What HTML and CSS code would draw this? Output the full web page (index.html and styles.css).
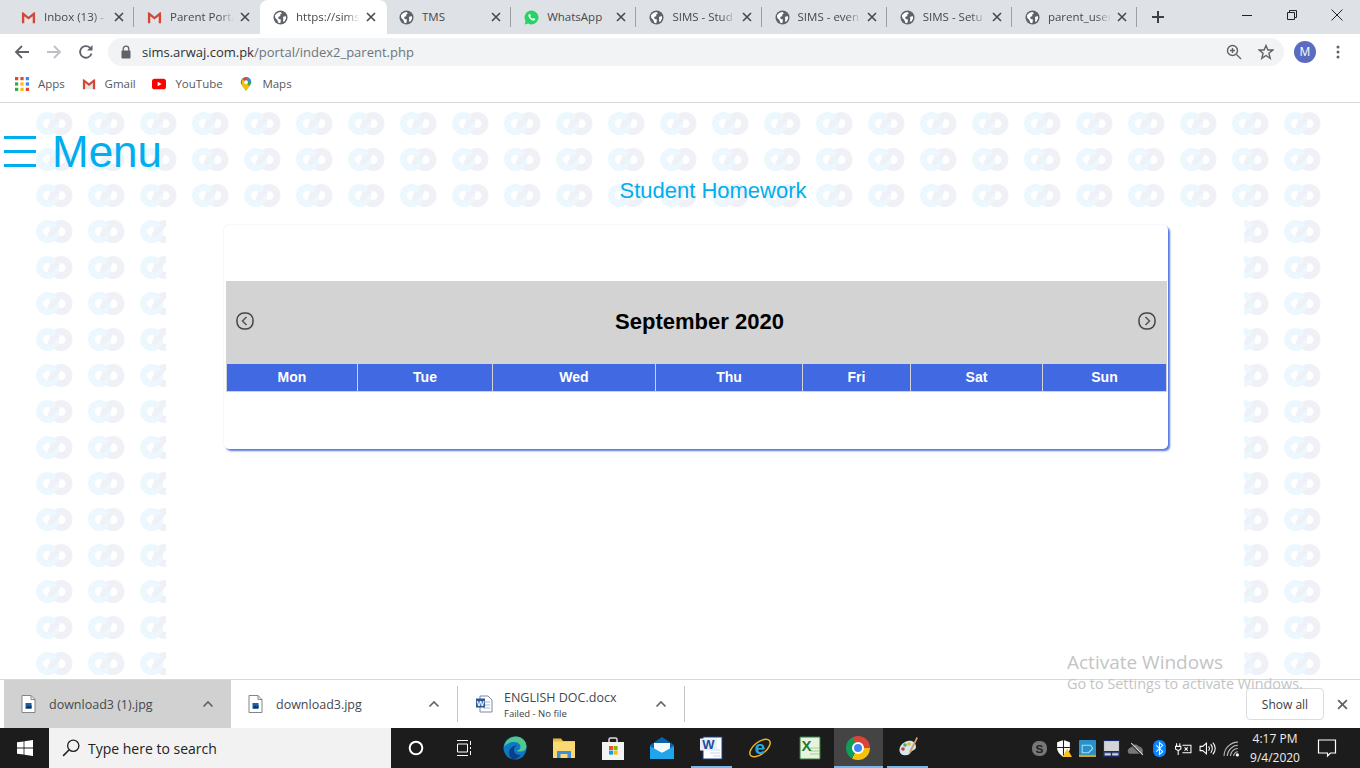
FILE: index.html
```html
<!DOCTYPE html>
<html lang="en">
    <head>
        <meta charset="utf-8">
        <meta name="viewport" content="width=device-width, initial-scale=1">
        <title>Student Homework</title>
        <link rel="stylesheet" href="styles.css">
    </head>
    <body>
        <svg class="defs">
            <symbol id="globe" viewBox="0 0 16 16">
                <circle cx="8" cy="8" r="7.5" fill="#5f6368"/>
                <path d="M2 5.5 5 3 8 2 9.5 3.5 7.5 5 8 6.5 5.5 7.5 6 9.5 8.5 10 8 13.5 6 14 4.5 10.5 2.5 8.5Z M10.5 7.5 13.5 6.5 14 9 12 12.5 10.5 12 11 9.5Z" fill="#fff"/>
            </symbol>
            <symbol id="gmail" viewBox="0 0 16 16">
                <path d="M1 3 8 8.5 15 3V14H1Z" fill="#e4e4e4"/>
                <path d="M1 2.5H2.2L8 7.2 13.8 2.5H15V14H12.5V6.6L8 10.2 3.5 6.6V14H1Z" fill="#d44638"/>
            </symbol>
            <symbol id="close" viewBox="0 0 10 10">
                <path d="M1 1 9 9M9 1 1 9" fill="none" stroke="currentColor" stroke-width="1.6"/>
            </symbol>
            <symbol id="chevron-up" viewBox="0 0 12 8">
                <path d="M1.5 6.5 6 2l4.5 4.5" fill="none" stroke="#5f6368" stroke-width="1.6"/>
            </symbol>
            <symbol id="file" viewBox="0 0 14 18">
                <path d="M.5.5H9.5L13.5 4.5V17.5H.5Z" fill="#fff" stroke="#80868b"/>
                <path d="M9.5.5V4.5H13.5" fill="none" stroke="#80868b"/>
                <rect x="4" y="8" width="6" height="5.500" fill="#1a5fa8"/>
                <path d="M4 13.500 6.500 10.500 8 12 10 10V13.500Z" fill="#0b2f5c"/>
            </symbol>
            <symbol id="round-arrow" viewBox="0 0 18 18">
                <rect x="1" y="1" width="16" height="16" rx="7" fill="none" stroke="#444" stroke-width="1.500"/>
                <path d="M10.5 5 6.5 9l4 4" fill="none" stroke="#555" stroke-width="1.500"/>
            </symbol>
        </svg>

        <div class="tabstrip">
            <div class="tab"><svg class="favicon"><use href="#gmail"/></svg><span class="tab-title fade">Inbox (13) -</span><svg class="tab-x"><use href="#close"/></svg></div>
            <div class="tab no-sep"><svg class="favicon"><use href="#gmail"/></svg><span class="tab-title fade">Parent Porta</span><svg class="tab-x"><use href="#close"/></svg></div>
            <div class="tab active no-sep"><svg class="favicon"><use href="#globe"/></svg><span class="tab-title fade">https://sims</span><svg class="tab-x"><use href="#close"/></svg></div>
            <div class="tab"><svg class="favicon"><use href="#globe"/></svg><span class="tab-title">TMS</span><svg class="tab-x"><use href="#close"/></svg></div>
            <div class="tab">
                <svg class="favicon" viewBox="0 0 16 16"><path d="M8 .5a7.4 7.4 0 0 0-6.3 11.2L.7 15.4l3.8-1A7.4 7.4 0 1 0 8 .5Z" fill="#25d366"/><path d="M5.6 4.2c-.9.6-1.2 1.8-.6 3 .9 1.9 2.400 3.300 4.400 4 1.100.3 2.200-.2 2.500-1.100l.1-.7-1.800-.9-.8.9c-1.200-.4-2.200-1.300-2.800-2.500l.7-.8-.8-1.900Z" fill="#fff"/></svg>
                <span class="tab-title">WhatsApp</span><svg class="tab-x"><use href="#close"/></svg>
            </div>
            <div class="tab"><svg class="favicon"><use href="#globe"/></svg><span class="tab-title fade">SIMS - Stud</span><svg class="tab-x"><use href="#close"/></svg></div>
            <div class="tab"><svg class="favicon"><use href="#globe"/></svg><span class="tab-title fade">SIMS - even</span><svg class="tab-x"><use href="#close"/></svg></div>
            <div class="tab"><svg class="favicon"><use href="#globe"/></svg><span class="tab-title fade">SIMS - Setu</span><svg class="tab-x"><use href="#close"/></svg></div>
            <div class="tab"><svg class="favicon"><use href="#globe"/></svg><span class="tab-title fade">parent_user</span><svg class="tab-x"><use href="#close"/></svg></div>
            <svg class="new-tab" viewBox="0 0 14 14"><path d="M7 1V13M1 7H13" stroke="#3c4043" stroke-width="2"/></svg>
            <div class="win-controls">
                <svg viewBox="0 0 12 12"><path d="M1 6.500H11" stroke="#222"/></svg>
                <svg viewBox="0 0 12 12"><path d="M1.500 3.500H8.500V10.500H1.500ZM3.500 3.500V1.500H10.500V8.500H8.500" fill="none" stroke="#222"/></svg>
                <svg viewBox="0 0 12 12"><path d="M.5.500 11.500 11.500M11.500.500 .5 11.500" stroke="#222"/></svg>
            </div>
        </div>

        <div class="toolbar">
            <svg class="nav-icon" viewBox="0 0 16 16"><path d="M15 8H2M8 2 2 8l6 6" fill="none" stroke="#5f6368" stroke-width="1.800"/></svg>
            <svg class="nav-icon" viewBox="0 0 16 16"><path d="M1 8H14M8 2l6 6-6 6" fill="none" stroke="#bdc1c6" stroke-width="1.800"/></svg>
            <svg class="nav-icon" viewBox="0 0 16 16"><path d="M13.500 9.500A5.800 5.800 0 1 1 12 3.800" fill="none" stroke="#5f6368" stroke-width="1.800"/><path d="M14.500 1V6.500H9Z" fill="#5f6368"/></svg>
            <div class="omnibox">
                <svg class="lock" viewBox="0 0 12 14"><path d="M3.200 6V4a2.800 2.800 0 0 1 5.600 0V6" fill="none" stroke="#5f6368" stroke-width="1.300"/><rect x="1.500" y="5.500" width="9" height="8" rx="1" fill="#5f6368"/></svg>
                <span class="url"><b>sims.arwaj.com.pk</b>/portal/index2_parent.php</span>
                <svg class="omni-icon zoom-icon" viewBox="0 0 16 16"><circle cx="6.500" cy="6.500" r="5" fill="none" stroke="#5f6368" stroke-width="1.400"/><path d="M10.500 10.500 15 15M6.500 4V9M4 6.500H9" stroke="#5f6368" stroke-width="1.400"/></svg>
                <svg class="omni-icon" viewBox="0 0 16 16"><path d="M8 1.500 9.900 6H14.800L10.900 9.200 12.200 14.300 8 11.500 3.800 14.300 5.100 9.200 1.200 6H6.100Z" fill="none" stroke="#5f6368" stroke-width="1.400"/></svg>
            </div>
            <span class="avatar">M</span>
            <svg class="kebab" viewBox="0 0 4 14"><circle cx="2" cy="2" r="1.500" fill="#5f6368"/><circle cx="2" cy="7" r="1.500" fill="#5f6368"/><circle cx="2" cy="12" r="1.500" fill="#5f6368"/></svg>
        </div>

        <div class="bookmarks">
            <div class="bookmark">
                <svg class="bm-icon" viewBox="0 0 13 13">
                    <rect width="3" height="3" fill="#ea4335"/><rect x="5" width="3" height="3" fill="#ea4335"/><rect x="10" width="3" height="3" fill="#4285f4"/>
                    <rect y="5" width="3" height="3" fill="#34a853"/><rect x="5" y="5" width="3" height="3" fill="#fbbc05"/><rect x="10" y="5" width="3" height="3" fill="#4285f4"/>
                    <rect y="10" width="3" height="3" fill="#34a853"/><rect x="5" y="10" width="3" height="3" fill="#fbbc05"/><rect x="10" y="10" width="3" height="3" fill="#ea4335"/>
                </svg>
                Apps
            </div>
            <div class="bookmark"><svg class="bm-icon"><use href="#gmail"/></svg>Gmail</div>
            <div class="bookmark">
                <svg class="bm-icon" viewBox="0 0 16 12"><rect width="16" height="12" rx="3" fill="#f00"/><path d="M6.500 3.500 11 6 6.500 8.500Z" fill="#fff"/></svg>
                YouTube
            </div>
            <div class="bookmark">
                <svg class="bm-icon" viewBox="0 0 12 16"><path d="M6 0a6 6 0 0 1 6 6c0 3.500-4 5.500-6 10C4 11.500 0 9.500 0 6a6 6 0 0 1 6-6Z" fill="#34a853"/><path d="M1.500 2 10 10.500C8.600 12 7 13.500 6 16 5 13.500 3 12 1.500 10Z" fill="#fbbc05"/><path d="M6 0a6 6 0 0 1 6 6L8 4Z" fill="#4285f4"/><path d="M6 0 2 2 4 4.500 8 3.500Z" fill="#ea4335"/><circle cx="6" cy="6" r="2.200" fill="#fff"/></svg>
                Maps
            </div>
        </div>

        <main class="page">
            <div class="menu-row">
                <span class="burger"><i></i><i></i><i></i></span>
                <span class="menu-label">Menu</span>
            </div>
            <h2 class="page-title">Student Homework</h2>
            <div class="sheet">
                <section class="card">
                    <div class="cal-head">
                        <svg class="cal-arrow"><use href="#round-arrow"/></svg>
                        <h3>September 2020</h3>
                        <svg class="cal-arrow next"><use href="#round-arrow"/></svg>
                    </div>
                    <div class="week">
                        <span>Mon</span><span>Tue</span><span>Wed</span><span>Thu</span><span>Fri</span><span>Sat</span><span>Sun</span>
                    </div>
                </section>
            </div>
        </main>

        <div class="activate">
            <p class="activate-big">Activate Windows</p>
            <p class="activate-small">Go to Settings to activate Windows.</p>
        </div>

        <div class="downloads">
            <div class="dl-item selected">
                <svg class="dl-icon"><use href="#file"/></svg>
                <span class="dl-name">download3 (1).jpg</span>
                <svg class="dl-chev"><use href="#chevron-up"/></svg>
            </div>
            <div class="dl-item">
                <svg class="dl-icon"><use href="#file"/></svg>
                <span class="dl-name">download3.jpg</span>
                <svg class="dl-chev"><use href="#chevron-up"/></svg>
            </div>
            <div class="dl-item">
                <svg class="dl-icon doc" viewBox="0 0 18 18"><path d="M5 1H13L17 5V17H5Z" fill="#fff" stroke="#7a8aa0"/><path d="M8 7H15M8 10H15M8 13H15" stroke="#9db4d4"/><rect x="1" y="3.500" width="9" height="9" fill="#2b579a"/><text x="5.500" y="11" class="doc-letter">W</text></svg>
                <span class="dl-name two-line">ENGLISH DOC.docx<small>Failed - No file</small></span>
                <svg class="dl-chev"><use href="#chevron-up"/></svg>
            </div>
            <button class="show-all">Show all</button>
            <svg class="dl-close"><use href="#close"/></svg>
        </div>

        <footer class="taskbar">
            <div class="start">
                <svg viewBox="0 0 16 16"><path d="M0 2.300 6.600 1.400V7.600H0ZM7.400 1.300 16 0V7.600H7.400ZM0 8.400H6.600V14.600L0 13.700ZM7.400 8.400H16V16L7.400 14.700Z" fill="#fff"/></svg>
            </div>
            <div class="search">
                <svg viewBox="0 0 16 16"><circle cx="10" cy="6" r="5" fill="none" stroke="#222" stroke-width="1.200"/><path d="M6.400 9.600 1 15" stroke="#222" stroke-width="1.400"/></svg>
                Type here to search
            </div>
            <div class="task narrow"><svg viewBox="0 0 16 16"><circle cx="8" cy="8" r="6.300" fill="none" stroke="#fff" stroke-width="2"/></svg></div>
            <div class="task narrow tight"><svg viewBox="0 0 16 16"><path d="M1 .5H12M1 15.500H12M1.500 4H11.500V12H1.500ZM14.500 1V5M14.500 7V9M14.500 11V15" fill="none" stroke="#fff"/></svg></div>
            <div class="task first-app"><svg viewBox="0 0 24 24"><circle cx="12" cy="12" r="11.500" fill="#0f78c4"/><path d="M1 11C2 4 8 .5 13 .5c6 0 10.500 4.500 10.500 10 0 3-3 5-6.500 5-2 0-3-.5-3.500-1 2 0 4-1 4-3.500C17.500 7 13 5.500 9.500 6 5 6.800 2 9 1 11Z" fill="#4fc88f"/><path d="M9 23C5.500 20 5 15 8 12c2-2 4-2.500 6-2.500-2.500 1-3.500 3-3 5.500.6 3 4 4.500 7 4-2 2.500-5.500 4.800-9 4Z" fill="#0b3f86"/></svg></div>
            <div class="task"><svg viewBox="0 0 24 24"><path d="M1 2.500H9L11 5H23V22H1Z" fill="#e8b93a"/><path d="M1 5.500H23V22H1Z" fill="#fbd972"/><path d="M5 15H19V22H15.500V18H8.500V22H5Z" fill="#3f8fdc"/></svg></div>
            <div class="task"><svg viewBox="0 0 24 24"><path d="M8 7V3.500A1.500 1.500 0 0 1 9.500 2H14.500A1.500 1.500 0 0 1 16 3.500V7" fill="none" stroke="#ddd" stroke-width="1.500"/><rect x="1" y="6" width="22" height="18" fill="#f3f3f3"/><rect x="8" y="10" width="4" height="4" fill="#f25022"/><rect x="12.600" y="10" width="4" height="4" fill="#7fba00"/><rect x="8" y="14.600" width="4" height="4" fill="#00a4ef"/><rect x="12.600" y="14.600" width="4" height="4" fill="#ffb900"/></svg></div>
            <div class="task"><svg viewBox="0 0 24 24"><path d="M12 1 24 9V23H0V9Z" fill="#0a63ad"/><path d="M4 7H20V14L12 17 4 14Z" fill="#f4f7fb"/><path d="M0 10 12 17 24 10V23H0Z" fill="#1fa5ec"/></svg></div>
            <div class="task open"><svg viewBox="0 0 24 24"><rect x="4" y="1" width="19" height="22" fill="#fff" stroke="#1c3f7c"/><path d="M11 14H21M11 17H21M14 20H21" stroke="#c9d6ea"/><rect x="1" y="2.500" width="17" height="12" fill="#e8eef8"/><text x="9.500" y="13" class="word-letter">W</text></svg></div>
            <div class="task"><svg viewBox="0 0 24 24"><ellipse cx="12" cy="12" rx="12" ry="6" transform="rotate(-38 12 12)" fill="none" stroke="#e8b52b" stroke-width="1.500"/><text x="12" y="18" class="ie-letter">e</text></svg></div>
            <div class="task"><svg viewBox="0 0 24 24"><path d="M3 1H23V23H3Z" fill="#e7f2df" stroke="#2f7d3b"/><path d="M13 12H22M13 15H22M13 18H22" stroke="#a7cf99"/><text x="9.500" y="15" class="excel-letter">X</text></svg></div>
            <div class="task open active"><span class="chrome"><i></i></span></div>
            <div class="task open"><svg viewBox="0 0 24 24"><path d="M10 6C16 3 21 6 21 11 21 14 17 14.500 16 16 15 18.500 12 20 8 19 3 17.500 3 9.500 10 6Z" fill="#d5e6ef"/><circle cx="8" cy="13" r="1.800" fill="#d23b3b"/><circle cx="10" cy="9" r="1.800" fill="#4caf50"/><circle cx="14" cy="8" r="1.800" fill="#e4b62b"/><path d="M21.500 1 15 14 13.500 19 16.500 15 23 2Z" fill="#cf9a5a"/></svg></div>

            <div class="tray">
                <svg viewBox="0 0 16 16"><rect x="1" y="1" width="14" height="14" rx="6" fill="#777"/><text x="8" y="12" class="skype-letter">S</text></svg>
                <svg viewBox="0 0 16 16"><path d="M8 0 14 2V8C14 11 11 14 8 16 5 14 2 11 2 8V2Z" fill="#fff"/><path d="M8 0V16M2 7H14" stroke="#1c1c1c"/><path d="M11.500 8 16 16H7Z" fill="#f7c31c"/></svg>
                <svg viewBox="0 0 16 16"><rect width="16" height="16" rx="1" fill="#2a90c8"/><path d="M3 5H11L13 8 9 12H3Z" fill="none" stroke="#a6e0f5"/><path d="M0 14H16V16H0Z" fill="#c9a437"/></svg>
                <svg viewBox="0 0 16 16"><rect x=".5" y=".5" width="15" height="15" fill="#d4d4d4" stroke="#1d2a6b"/><path d="M1 11H15M8 11V15" stroke="#1d2a6b" stroke-width="1.200"/><path d="M1 12H15V15H1Z" fill="none" stroke="#1d2a6b"/></svg>
                <svg viewBox="0 0 16 16"><path d="M1 12C0 9 2 7 4 7 5 4 9 3 11 6 13 6 15.500 8 15 11 15 12 14 13 13 13H3C2 13 1.500 12.500 1 12Z" fill="#777"/><path d="M3 3 14 14" stroke="#1c1c1c" stroke-width="1.400"/><path d="M4 3 15 14" stroke="#ddd"/></svg>
                <svg viewBox="0 0 16 16"><rect x="2" width="12" height="16" rx="5.500" fill="#0a84ff"/><path d="M5 5 11 11 8 13.500V2.500L11 5 5 11" fill="none" stroke="#fff"/></svg>
                <svg viewBox="0 0 16 16"><path d="M1.500 3V6M4.500 3V6M.5 6H5.500V8.500L3 10 .5 8.500ZM3 10V14M7 5H15V12H7" fill="none" stroke="#fff"/><path d="M9 7 12 10M12 7 9 10" stroke="#fff"/></svg>
                <svg viewBox="0 0 16 16"><path d="M1 6H3.500L7 3V13L3.500 10H1Z" fill="none" stroke="#fff"/><path d="M9 6C10 7 10 9 9 10M11 4C13 6 13 10 11 12M13 2.500C16 5.500 16 10.500 13 13.500" fill="none" stroke="#fff"/></svg>
                <svg viewBox="0 0 16 16"><path d="M1 15C1 8 7 2 14 2M4 15C4 10 9 5 14 5M7 15C7 11.500 10 8 14 8M10 15C10 13 12 11 14 11" fill="none" stroke="#bbb"/><circle cx="13.500" cy="14" r="1.500" fill="#fff"/></svg>
            </div>
            <div class="clock">4:17 PM<br>9/4/2020</div>
            <svg class="notify" viewBox="0 0 20 20"><path d="M1.500 2H18.500V15H13.500L10.500 18V15H1.500Z" fill="none" stroke="#fff" stroke-width="1.200"/></svg>
        </footer>
    </body>
</html>
```

FILE: styles.css
```css
html, body {height: 100%}
body {
    font-family: "Open Sans", "Liberation Sans", sans-serif;
    font-size: 12px;
    color: #3c4043;
    margin: 0;
    height: 100vh;
    overflow: hidden;
    display: flex;
    flex-direction: column;
    position: relative;
    background: #fff;
}
.defs {
    display: none;
}
p, h2, h3 {
    margin: 0;
    font-weight: normal;
}

/* tabs */
.tabstrip {
    display: flex;
    align-items: center;
    height: 34px;
    flex: none;
    padding-left: 8px;
    background: #dee1e6;
}
.tab {
    display: flex;
    align-items: center;
    box-sizing: border-box;
    width: 125.2px;
    height: 34px;
    padding: 0 10px 0 13px;
    position: relative;
}
.tab:nth-child(-n+3) {
    width: 126px;
}
.tab::after {
    content: "";
    position: absolute;
    top: 7px;
    right: 0;
    width: 1px;
    height: 20px;
    background: #9aa0a6;
}
.tab.no-sep::after {
    display: none;
}
.tab.active {
    width: 127px;
    margin-right: -1px;
    padding-right: 11px;
    background: #fff;
    border-radius: 8px 8px 0 0;
}
.favicon {
    width: 15px;
    height: 15px;
    flex: none;
    margin-right: 8px;
}
.tab-title {
    flex: 1;
    min-width: 0;
    margin-right: 2px;
    overflow: hidden;
    white-space: nowrap;
    font-size: 11.5px;
    line-height: 16px;
    color: #45494d;
}
.tab-title.fade {
    -webkit-mask-image: linear-gradient(to right, #000 72%, transparent 94%);
    mask-image: linear-gradient(to right, #000 72%, transparent 94%);
}
.tab-x {
    width: 10px;
    height: 10px;
    flex: none;
    color: #45494d;
}
.new-tab {
    width: 14px;
    height: 14px;
    margin-left: 14px;
}
.win-controls {
    display: flex;
    gap: 33px;
    margin-left: auto;
    padding-right: 17px;
    margin-top: -5px;
}
.win-controls svg {
    width: 12px;
    height: 12px;
}

/* toolbar */
.toolbar {
    display: flex;
    align-items: center;
    height: 35px;
    flex: none;
    padding-left: 14px;
}
.nav-icon {
    width: 16px;
    height: 16px;
    margin-right: 16px;
}
.omnibox {
    display: flex;
    align-items: center;
    box-sizing: border-box;
    width: 1176px;
    height: 28px;
    margin-left: -2px;
    padding: 0 10px 0 12px;
    background: #f1f3f4;
    border-radius: 14px;
}
.lock {
    width: 12px;
    height: 14px;
    margin-right: 10px;
}
.url {
    flex: 1;
    font-size: 13px;
    color: #70757a;
}
.url b {
    font-weight: normal;
    color: #2f3235;
}
.omni-icon {
    width: 16px;
    height: 16px;
}
.zoom-icon {
    margin-right: 16px;
}
.avatar {
    width: 22px;
    height: 22px;
    margin-left: 10px;
    border-radius: 50%;
    background: #5c6bc0;
    color: #fff;
    font-size: 12px;
    line-height: 22px;
    text-align: center;
}
.kebab {
    width: 4px;
    height: 14px;
    margin-left: 20px;
}

/* bookmarks */
.bookmarks {
    display: flex;
    align-items: center;
    gap: 16.700px;
    box-sizing: border-box;
    height: 34px;
    flex: none;
    padding: 0 0 4px 15px;
    border-bottom: 1px solid #d6d8da;
}
.bookmark {
    display: flex;
    align-items: center;
    gap: 9px;
    font-size: 11.500px;
    color: #55595d;
}
.bm-icon {
    width: 14px;
    height: 14px;
}

/* page */
.page {
    flex: 1;
    min-height: 0;
    display: flex;
    flex-direction: column;
    position: relative;
    font-family: "Liberation Sans", Arial, sans-serif;
}
.page::before {
    content: "";
    position: absolute;
    top: 9px;
    right: 36px;
    bottom: 0;
    left: 36px;
    background-image: url("data:image/svg+xml,%3Csvg xmlns='http://www.w3.org/2000/svg' width='52' height='36'%3E%3Ccircle cx='25' cy='11.500' r='8' fill='none' stroke='%23f0f1f6' stroke-width='7'/%3E%3Ccircle cx='11.500' cy='11.500' r='8' fill='none' stroke='%23ecf8fe' stroke-width='7'/%3E%3Cpath d='M13 16 23 6' stroke='%23f0f1f6' stroke-width='5'/%3E%3C/svg%3E");
    background-size: 52px 36px;
}
.menu-row {
    display: flex;
    align-items: center;
    gap: 16px;
    position: relative;
    margin-top: 24px;
    padding-left: 4px;
    height: 49px;
    color: #00aeef;
}
.burger {
    display: flex;
    flex-direction: column;
    gap: 11px;
    width: 32px;
}
.burger i {
    display: block;
    height: 3px;
    background: #00aeef;
}
.menu-label {
    font-size: 44px;
    line-height: 49px;
}
.page-title {
    position: relative;
    height: 26px;
    margin-top: 2px;
    padding-left: 66px;
    font-size: 22px;
    line-height: 26px;
    text-align: center;
    color: #00aeef;
}
.sheet {
    flex: 1;
    position: relative;
    margin: 3px 116px 0 166px;
    padding: 18px 0 0 58px;
    background: #fff;
}

/* calendar card */
.card {
    box-sizing: border-box;
    width: 944px;
    height: 224px;
    padding: 56px 1px 0 2px;
    background: #fff;
    border-radius: 5px;
    box-shadow: 2px 2px 2px #5577e6, 0 0 2px #dfe5fb;
}
.cal-head {
    display: flex;
    align-items: center;
    justify-content: space-between;
    height: 83px;
    padding: 0 11px 0 10px;
    background: #d3d3d3;
}
.cal-head h3 {
    font-size: 22px;
    font-weight: bold;
    line-height: 24px;
    margin: -2px 0 0 7px;
    color: #000;
}
.cal-arrow {
    width: 18px;
    height: 18px;
    margin-top: -3px;
}
.cal-arrow.next {
    transform: scaleX(-1);
}
.week {
    display: grid;
    grid-template-columns: 130px 134px 162px 146px 107px 131px 123px;
    gap: 1px;
    height: 27px;
    padding: 0 1px 1px;
    background: #d3d3d3;
}
.week span {
    background: #4169e1;
    color: #fff;
    font-size: 14px;
    font-weight: bold;
    line-height: 27px;
    text-align: center;
}

/* activate watermark */
.activate {
    position: absolute;
    left: 1067px;
    top: 650px;
    color: #c4c4c4;
    pointer-events: none;
    z-index: 2;
    font-family: "Open Sans", sans-serif;
}
.activate-big {
    font-size: 19px;
    line-height: 24px;
}
.activate-small {
    font-size: 14.400px;
    line-height: 20px;
    white-space: nowrap;
}

/* download shelf */
.downloads {
    display: flex;
    align-items: center;
    box-sizing: border-box;
    height: 49px;
    flex: none;
    padding-left: 4px;
    border-top: 1px solid #d6d8da;
}
.dl-item {
    display: flex;
    align-items: center;
    box-sizing: border-box;
    width: 227px;
    height: 36px;
    padding: 0 17px;
    border-right: 1px solid #c4c7ca;
}
.dl-item.selected {
    height: 48px;
    background: #d1d1d1;
    border-right: 0;
}
.dl-icon {
    width: 15px;
    height: 18px;
    flex: none;
    margin-right: 13px;
}
.dl-icon.doc {
    width: 18px;
    margin-right: 11px;
}
.dl-name {
    flex: 1;
    padding-top: 1px;
    font-size: 12.500px;
    color: #45494d;
    white-space: nowrap;
}
.dl-name small {
    display: block;
    margin-top: 1px;
    font-size: 9.500px;
    line-height: 13px;
    color: #3c4043;
}
.two-line {
    padding-top: 0;
    line-height: 17px;
}
.dl-chev {
    width: 12px;
    height: 8px;
    flex: none;
}
.doc-letter {
    font: bold 8px "Liberation Sans", sans-serif;
    fill: #fff;
    text-anchor: middle;
}
.show-all {
    box-sizing: border-box;
    width: 78px;
    height: 32px;
    margin-left: auto;
    padding: 0;
    background: #fff;
    border: 1px solid #dadce0;
    border-radius: 4px;
    font: 12px "Open Sans", sans-serif;
    color: #3c4043;
}
.dl-close {
    width: 11px;
    height: 11px;
    margin: 0 12px 0 13px;
    color: #5f6368;
}

/* taskbar */
.taskbar {
    display: flex;
    align-items: center;
    height: 40px;
    flex: none;
    background: #1c1c1c;
    color: #fff;
}
.start {
    display: flex;
    justify-content: center;
    align-items: center;
    width: 49px;
    height: 40px;
}
.start svg {
    width: 16px;
    height: 16px;
}
.search {
    display: flex;
    align-items: center;
    gap: 8px;
    box-sizing: border-box;
    width: 342px;
    height: 40px;
    padding-left: 13px;
    background: #f2f2f2;
    color: #222;
    font-size: 14px;
}
.search svg {
    width: 18px;
    height: 18px;
}
.task {
    display: flex;
    justify-content: center;
    align-items: center;
    box-sizing: border-box;
    width: 49px;
    height: 40px;
    position: relative;
}
.task svg {
    width: 24px;
    height: 24px;
}
.task.narrow svg {
    width: 16px;
    height: 16px;
}
.task.tight {
    width: 47px;
}
.task.first-app {
    margin-left: 3.500px;
}
.task.open::after {
    content: "";
    position: absolute;
    left: 4px;
    right: 4px;
    bottom: 0;
    height: 2px;
    background: #76b9ed;
}
.task.active {
    background: #444;
}
.task.active::after {
    left: 0;
    right: 0;
}
.chrome {
    display: flex;
    justify-content: center;
    align-items: center;
    width: 24px;
    height: 24px;
    border-radius: 50%;
    background: conic-gradient(#db4437 0 90deg, #f4c20d 90deg 210deg, #0f9d58 210deg 330deg, #db4437 330deg);
}
.chrome i {
    width: 8px;
    height: 8px;
    border: 2.500px solid #fff;
    border-radius: 50%;
    background: #4285f4;
}
.word-letter {
    font: bold 13px "Liberation Sans", sans-serif;
    fill: #1f4e9e;
    text-anchor: middle;
}
.ie-letter {
    font: bold 19px "Liberation Sans", sans-serif;
    fill: #2ba6e6;
    text-anchor: middle;
}
.excel-letter {
    font: bold 15px "Liberation Sans", sans-serif;
    fill: #1f7a36;
    text-anchor: middle;
}
.skype-letter {
    font: bold 11px "Liberation Sans", sans-serif;
    fill: #222;
    text-anchor: middle;
}
.tray {
    display: flex;
    align-items: center;
    gap: 7px;
    margin-left: auto;
}
.tray svg {
    width: 17px;
    height: 17px;
}
.clock {
    width: 64px;
    margin-left: 3px;
    font-size: 12px;
    line-height: 19px;
    text-align: center;
    color: #eee;
}
.notify {
    width: 20px;
    height: 20px;
    margin: 0 23px 0 10px;
}
```
